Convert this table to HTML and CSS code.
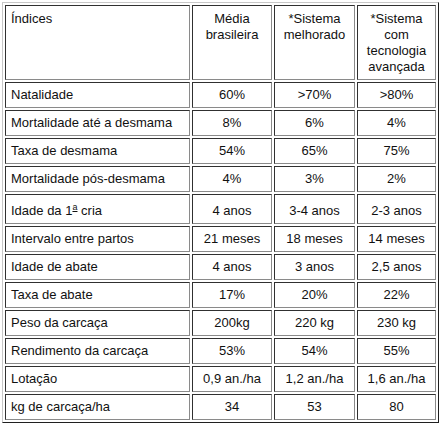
FILE: index.html
```html
<!DOCTYPE html>
<html>
<head>
<meta charset="utf-8">
<link rel="stylesheet" href="styles.css">
</head>
<body>
<table class="data">
  <colgroup>
    <col class="c1"><col class="c2"><col class="c3"><col class="c4">
  </colgroup>
  <tr class="head">
    <td class="label">Índices</td>
    <td>Média<br>brasileira</td>
    <td>*Sistema<br>melhorado</td>
    <td>*Sistema<br>com<br>tecnologia<br>avançada</td>
  </tr>
  <tr><td class="label">Natalidade</td><td>60%</td><td>&gt;70%</td><td>&gt;80%</td></tr>
  <tr><td class="label">Mortalidade até a desmama</td><td>8%</td><td>6%</td><td>4%</td></tr>
  <tr><td class="label">Taxa de desmama</td><td>54%</td><td>65%</td><td>75%</td></tr>
  <tr><td class="label">Mortalidade pós-desmama</td><td>4%</td><td>3%</td><td>2%</td></tr>
  <tr class="tall"><td class="label">Idade da 1<u class="ord">a</u> cria</td><td>4 anos</td><td>3-4 anos</td><td>2-3 anos</td></tr>
  <tr><td class="label">Intervalo entre partos</td><td>21 meses</td><td>18 meses</td><td>14 meses</td></tr>
  <tr><td class="label">Idade de abate</td><td>4 anos</td><td>3 anos</td><td>2,5 anos</td></tr>
  <tr><td class="label">Taxa de abate</td><td>17%</td><td>20%</td><td>22%</td></tr>
  <tr><td class="label">Peso da carcaça</td><td>200kg</td><td>220 kg</td><td>230 kg</td></tr>
  <tr><td class="label">Rendimento da carcaça</td><td>53%</td><td>54%</td><td>55%</td></tr>
  <tr><td class="label">Lotação</td><td>0,9 an./ha</td><td>1,2 an./ha</td><td>1,6 an./ha</td></tr>
  <tr><td class="label">kg de carcaça/ha</td><td>34</td><td>53</td><td>80</td></tr>
</table>
</body>
</html>
```
FILE: styles.css
```css
html, body {
  margin: 0;
  padding: 0;
  background: #ffffff;
}
body {
  padding: 2px 0 0 2px;
}
.data {
  border-collapse: separate;
  border-spacing: 2px;
  border: 1px solid;
  border-color: #c8c8c8 #202020 #202020 #c8c8c8;
  width: 437px;
  table-layout: fixed;
  font-family: "Liberation Sans", Arial, sans-serif;
  font-size: 13px;
  color: #111111;
}
.c1 { width: 185px; }
.c2 { width: 80px; }
.c3 { width: 81px; }
.c4 { width: 79px; }
.data td {
  border: 1px solid;
  border-color: #303030 #8a8a8a #8a8a8a #303030;
  padding: 1px 2px;
  height: 22px;
  text-align: center;
  vertical-align: middle;
  line-height: 16px;
  white-space: nowrap;
}
.data td.label {
  text-align: left;
  padding-left: 5px;
}
.head td {
  vertical-align: top;
  height: 67px;
  padding-top: 5px;
}
.tall td {
  height: 23px;
  padding-top: 4px;
}
.ord {
  font-size: 9px;
  vertical-align: 5px;
  line-height: 0;
}
```
